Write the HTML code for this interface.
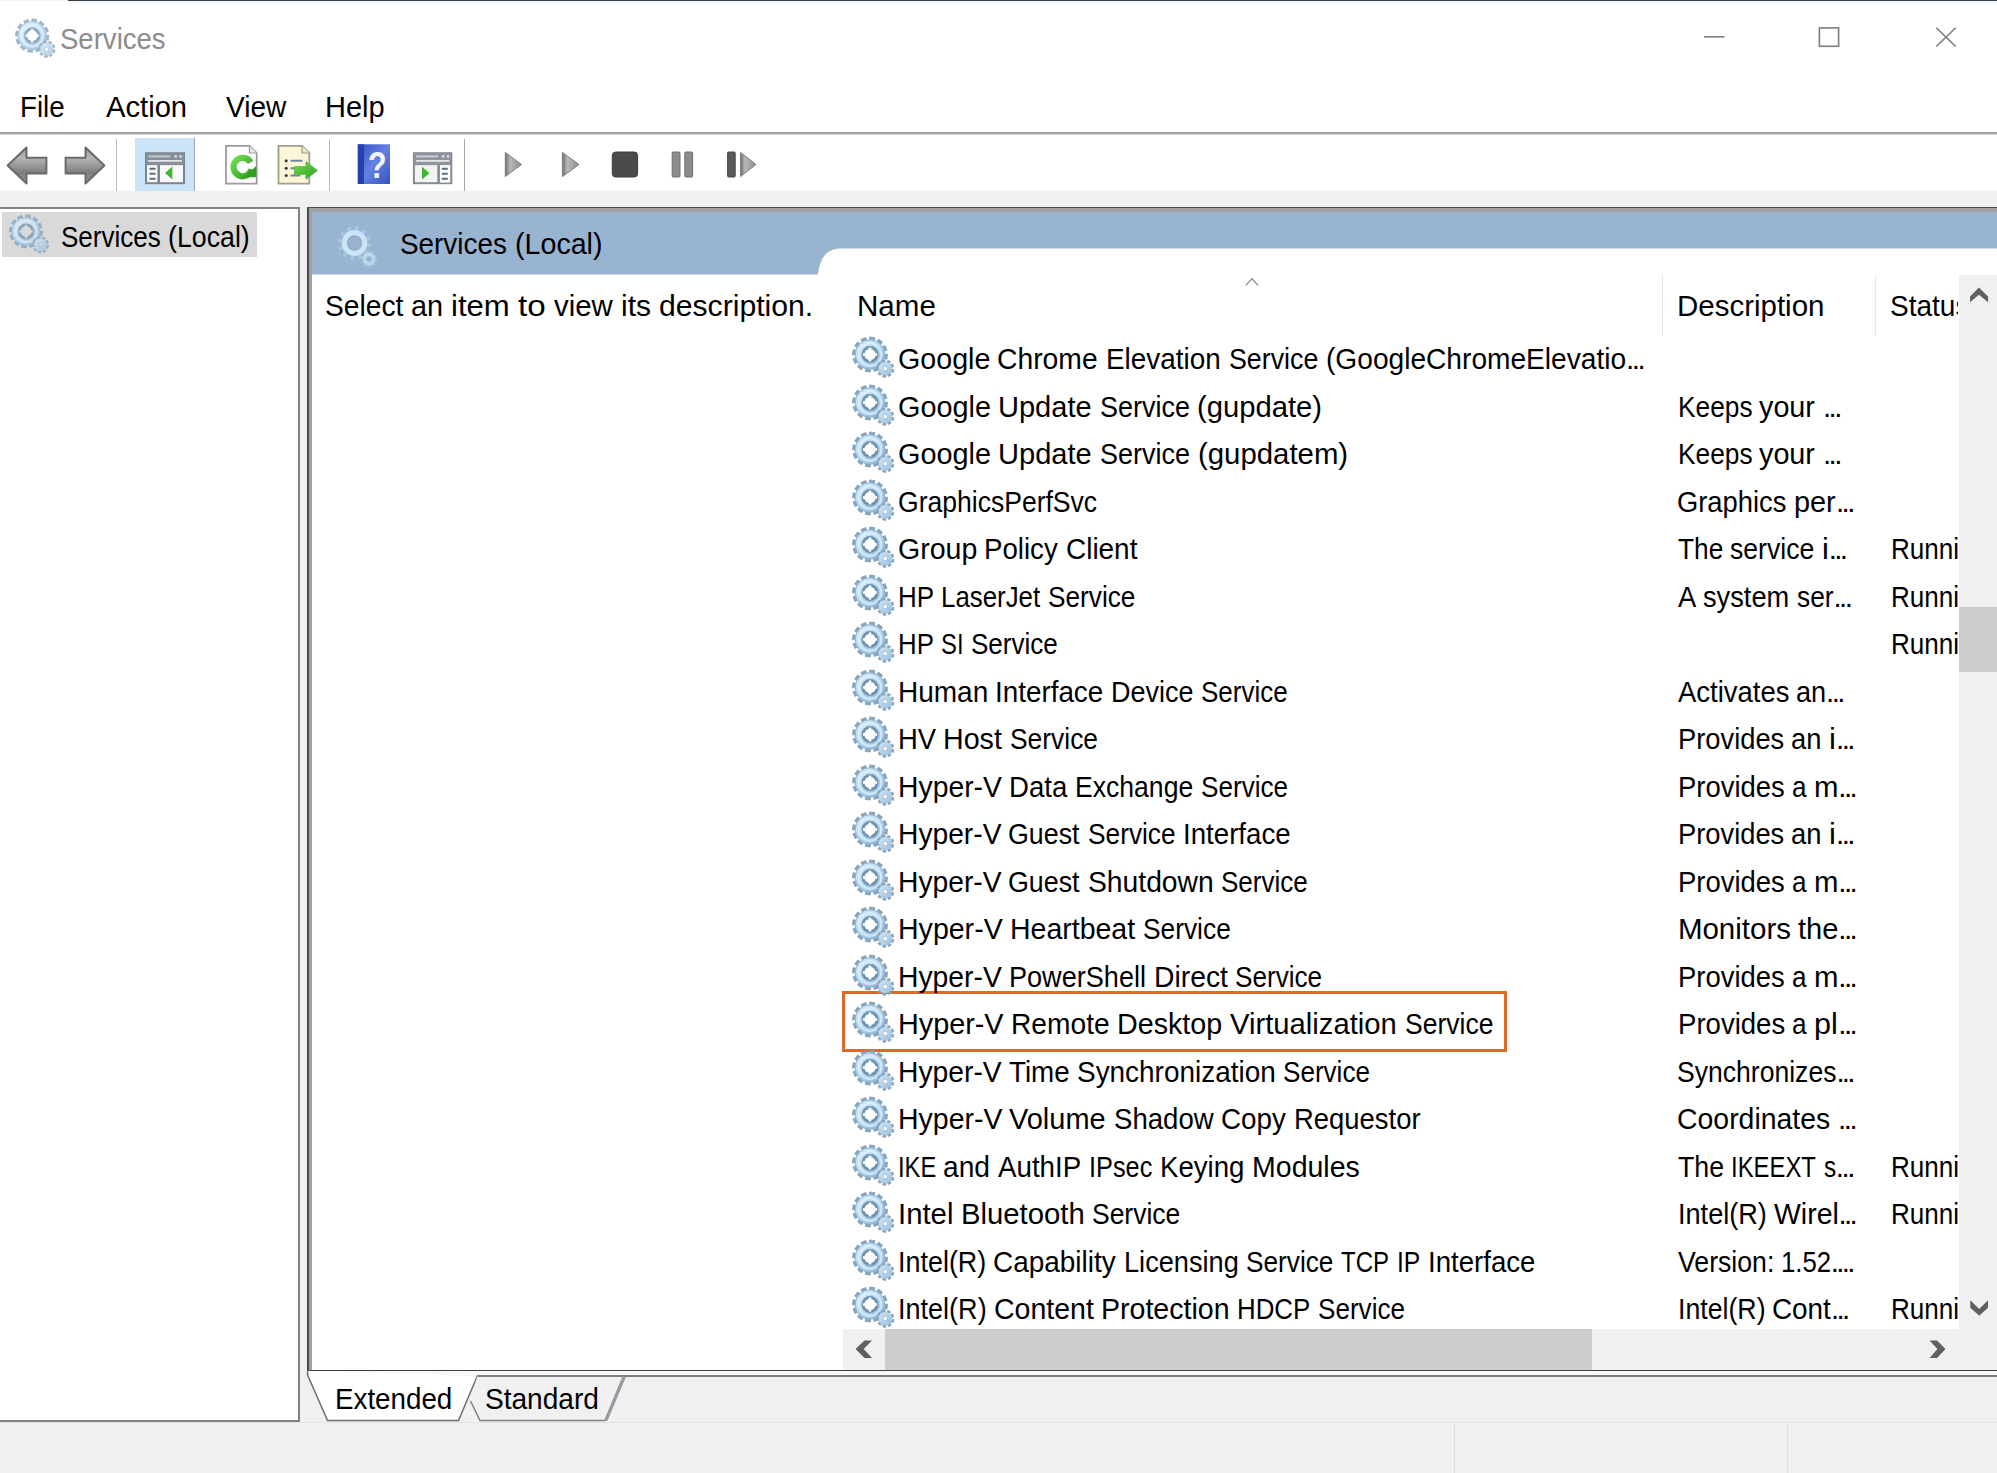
<!DOCTYPE html>
<html lang="en"><head><meta charset="utf-8"><title>Services</title>
<style>
html,body{margin:0;padding:0}
html{overflow:hidden;width:1997px;height:1473px;background:#f0f0f0}
body{width:1997px;height:1473px;position:relative;overflow:hidden;background:#f0f0f0;font-family:"Liberation Sans",sans-serif;font-size:29px}
.a{position:absolute}
.t{position:absolute;top:0;white-space:pre;line-height:40px;height:40px;font-size:29.5px;transform-origin:0 0;font-family:"Liberation Sans",sans-serif}
.r{position:absolute;left:0;height:40px;width:0;white-space:pre}
.clip{position:absolute;height:40px;overflow:hidden}
.ic{position:absolute;overflow:visible}
</style></head><body>
<svg width="0" height="0" style="position:absolute"><defs>
<linearGradient id="gg" x1="0.1" y1="0.05" x2="0.9" y2="0.95"><stop offset="0" stop-color="#d3eaf9"/><stop offset="0.5" stop-color="#b4d6ee"/><stop offset="1" stop-color="#8fb6d6"/></linearGradient>
<linearGradient id="gs" x1="0" y1="0" x2="1" y2="1"><stop offset="0" stop-color="#cfe6f6"/><stop offset="1" stop-color="#9abfdc"/></linearGradient>
<symbol id="gear" viewBox="0 0 44 44" overflow="visible">
<path fill-rule="evenodd" fill="#86a5bf" stroke="#7d9ab3" stroke-width=".7" d="M32.19,17.97 L35.60,18.21 L34.93,23.31 L31.58,22.66 L30.56,25.13 L33.39,27.05 L30.26,31.13 L27.68,28.89 L25.56,30.52 L27.05,33.59 L22.30,35.57 L21.18,32.34 L18.53,32.69 L18.29,36.10 L13.19,35.43 L13.84,32.08 L11.37,31.06 L9.45,33.89 L5.37,30.76 L7.61,28.18 L5.98,26.06 L2.91,27.55 L0.93,22.80 L4.16,21.68 L3.81,19.03 L0.40,18.79 L1.07,13.69 L4.42,14.34 L5.44,11.87 L2.61,9.95 L5.74,5.87 L8.32,8.11 L10.44,6.48 L8.95,3.41 L13.70,1.43 L14.82,4.66 L17.47,4.31 L17.71,0.90 L22.81,1.57 L22.16,4.92 L24.63,5.94 L26.55,3.11 L30.63,6.24 L28.39,8.82 L30.02,10.94 L33.09,9.45 L35.07,14.20 L31.84,15.32Z M11.90,18.50a6.10,6.10 0 1,0 12.20,0a6.10,6.10 0 1,0 -12.20,0Z"/>
<path fill-rule="evenodd" fill="url(#gg)" stroke="#8fb0cd" stroke-width=".9" d="M3.20,18.50a14.80,14.80 0 1,0 29.60,0a14.80,14.80 0 1,0 -29.60,0Z M11.90,18.50a6.10,6.10 0 1,0 12.20,0a6.10,6.10 0 1,0 -12.20,0Z"/>
<circle cx="18" cy="18.5" r="11.3" fill="none" stroke="#e4f3fd" stroke-width="2.2" opacity=".7"/>
<circle cx="18" cy="18.5" r="7.3" fill="none" stroke="#6888a5" stroke-width="2.3" opacity=".9"/>
<path d="M16.8,11.4h2.4v2.2h-2.4zM16.8,23.4h2.4v2.2h-2.4zM10.900,17.300h2.2v2.4h-2.2zM22.900,17.300h2.2v2.4h-2.2z" style="fill:var(--bg,#fff)"/>
<path fill-rule="evenodd" fill="#89a8c2" stroke="#7d9ab3" stroke-width=".6" d="M39.67,33.18 L42.04,33.64 L41.10,36.68 L38.89,35.72 L37.81,37.14 L39.33,39.01 L36.66,40.74 L35.57,38.58 L33.84,38.98 L33.79,41.39 L30.64,40.99 L31.20,38.64 L29.61,37.83 L28.03,39.65 L25.87,37.32 L27.80,35.88 L27.11,34.24 L24.73,34.61 L24.58,31.44 L26.98,31.58 L27.51,29.88 L25.44,28.63 L27.36,26.10 L29.12,27.76 L30.61,26.79 L29.83,24.51 L32.93,23.81 L33.21,26.20 L34.98,26.42 L35.84,24.18 L38.67,25.63 L37.34,27.64 L38.55,28.95 L40.66,27.78 L41.89,30.71 L39.59,31.40Z M31.00,32.60a2.30,2.30 0 1,0 4.60,0a2.30,2.30 0 1,0 -4.60,0Z"/>
<path fill-rule="evenodd" fill="url(#gs)" d="M26.60,32.60a6.70,6.70 0 1,0 13.40,0a6.70,6.70 0 1,0 -13.40,0Z M31.00,32.60a2.30,2.30 0 1,0 4.60,0a2.30,2.30 0 1,0 -4.60,0Z"/>
</symbol></defs></svg>
<!-- title + menu -->
<div class="a" style="left:0;top:0;width:1997px;height:132px;background:#fff"></div>
<div class="a" style="left:0;top:0;width:68px;height:1px;background:#f4f4f4"></div>
<div class="a" style="left:68px;top:0;width:1929px;height:1px;background:#3a4149"></div>
<div class="a" style="left:68px;top:1px;width:1929px;height:2px;background:#f1f6fb"></div>
<!-- caption buttons -->
<svg class="ic" style="left:1690px;top:15px" width="300" height="45">
<path d="M14,21.8H34.5" stroke="#7d7d7d" stroke-width="1.6" fill="none"/>
<rect x="129.4" y="12.9" width="19.2" height="18.4" stroke="#7d7d7d" stroke-width="1.6" fill="none"/>
<path d="M246.3,12.7L265.7,31.5M265.7,12.7L246.3,31.5" stroke="#7d7d7d" stroke-width="1.6" fill="none"/>
</svg>
<!-- menu underline -->
<div class="a" style="left:0;top:132px;width:1997px;height:2px;background:#a3a3a3"></div>
<div class="a" style="left:0;top:134px;width:1997px;height:1px;background:#dcdcdc"></div>
<!-- toolbar -->
<div class="a" style="left:0;top:135px;width:1997px;height:56px;background:#fff"></div>
<!-- toolbar separators -->
<div class="a" style="left:116.400px;top:138.500px;width:1.100px;height:52px;background:#bcbcbc"></div>
<div class="a" style="left:329px;top:138.500px;width:1.200px;height:52px;background:#b8b8b8"></div>
<div class="a" style="left:464.200px;top:138.500px;width:1.200px;height:52px;background:#a8a8a8"></div>
<!-- highlighted button -->
<div class="a" style="left:135px;top:137.500px;width:58.500px;height:53.500px;background:#cce4f7"></div>
<div class="a" style="left:194px;top:137.500px;width:1px;height:53.500px;background:#9aa7b4"></div>
<svg class="ic" style="left:0;top:135px" width="800" height="56">
<defs>
<linearGradient id="ag" x1="0" y1="0" x2="0" y2="1"><stop offset="0" stop-color="#9c9c9c"/><stop offset=".3" stop-color="#b4b4b4"/><stop offset=".7" stop-color="#7e7e7e"/><stop offset="1" stop-color="#9a9a9a"/></linearGradient>
<linearGradient id="pg" x1="0" y1="0" x2="1" y2="0"><stop offset="0" stop-color="#6f6f6f"/><stop offset=".3" stop-color="#b8b8b8"/><stop offset="1" stop-color="#8e8e8e"/></linearGradient>
<linearGradient id="hg" x1="0" y1="0" x2="1" y2="1"><stop offset="0" stop-color="#3450c4"/><stop offset=".5" stop-color="#6482e2"/><stop offset="1" stop-color="#3752c0"/></linearGradient>
<linearGradient id="grn" x1="0" y1="0" x2="1" y2="1"><stop offset="0" stop-color="#6fdc52"/><stop offset="1" stop-color="#2f9e1e"/></linearGradient>
</defs>
<!-- back / forward arrows -->
<path d="M7.600,30.500L26.500,12.600V22.800H46.400V38.400H26.500V48.400Z" fill="url(#ag)" stroke="#6a6a6a" stroke-width="2" stroke-linejoin="round"/>
<path d="M104.400,30.500L85.500,12.600V22.800H65.600V38.400H85.500V48.400Z" fill="url(#ag)" stroke="#6a6a6a" stroke-width="2" stroke-linejoin="round"/>
<!-- show/hide console tree -->
<rect x="146" y="18.200" width="38" height="30" fill="#fafafa" stroke="#7d8590" stroke-width="2"/>
<rect x="146" y="18.200" width="38" height="12" fill="#878f9b"/>
<rect x="148.300" y="20.500" width="22" height="1.800" fill="#c9ced6"/>
<rect x="174.500" y="20.200" width="2.400" height="2.400" fill="#dfe3e8"/><rect x="179.300" y="20.200" width="2.400" height="2.400" fill="#dfe3e8"/>
<rect x="148" y="25" width="34" height="1.800" fill="#dfe3ea"/>
<rect x="157.400" y="30" width="2.600" height="18" fill="#7d8590"/>
<path d="M149.500,33.800h6M149.500,38.800h6M149.500,43.800h6" stroke="#5f6b80" stroke-width="2"/>
<path d="M172.300,31.500V44.500L165,38Z" fill="#3fb62f"/>
<!-- refresh -->
<path d="M226,10.800H249.500L256.700,18V48.700H226Z" fill="#fdfdfd" stroke="#9c9c9c" stroke-width="1.800"/>
<path d="M249.500,10.800V18H256.700" fill="#e8e8e8" stroke="#9c9c9c" stroke-width="1.200"/>
<path d="M251.590,34.400A9.200,9.200 0 1 1 250.600,27.300" fill="none" stroke="url(#grn)" stroke-width="6.2"/>
<path d="M244,42.300h12.300v-11.300Z" fill="#2fa01f"/>
<!-- export list -->
<path d="M278.500,10.800H302L309.300,18V48.700H278.500Z" fill="#fdf5d8" stroke="#a39d8c" stroke-width="1.800"/>
<path d="M302,10.800V18H309.300" fill="#efe7c8" stroke="#a39d8c" stroke-width="1.200"/>
<circle cx="286.200" cy="25.800" r="1.500" fill="#333"/><circle cx="286.200" cy="33.200" r="1.500" fill="#333"/><circle cx="286.200" cy="40.600" r="1.500" fill="#333"/>
<path d="M290.500,25.800h12M290.500,33.200h6M290.500,40.600h10" stroke="#7186a6" stroke-width="2"/>
<path d="M294.500,31.700h11.500v-5L317.400,35.500L306,44.300v-5H294.500Z" fill="url(#grn)" stroke="#48b532" stroke-width=".8"/>
<!-- help -->
<rect x="357.800" y="9.300" width="32.200" height="39.700" fill="url(#hg)"/>
<rect x="357.800" y="9.300" width="6.200" height="39.700" fill="#263fae"/>
<text x="377.200" y="43.500" font-family="Liberation Sans, sans-serif" font-weight="bold" font-size="37" fill="#f4f6ff" text-anchor="middle" transform="translate(377.200 0) scale(.82 1) translate(-377.200 0)">?</text>
<!-- action pane icon -->
<rect x="413.900" y="18.200" width="37.400" height="30" fill="#f4f4f4" stroke="#858a93" stroke-width="2"/>
<rect x="413.900" y="18.200" width="37.400" height="12" fill="#8f949d"/>
<rect x="416.200" y="20.500" width="22" height="1.800" fill="#d0d4da"/>
<rect x="442" y="20.200" width="2.400" height="2.400" fill="#e3e6ea"/><rect x="446.800" y="20.200" width="2.400" height="2.400" fill="#e3e6ea"/>
<rect x="416" y="25" width="33.400" height="1.800" fill="#e3e6ea"/>
<rect x="437.300" y="30" width="2.600" height="18" fill="#858a93"/>
<rect x="440" y="30.500" width="10" height="17" fill="#fdfdfd"/>
<path d="M441.800,33.800h6M441.800,38.800h6M441.800,43.800h6" stroke="#5f6b80" stroke-width="2"/>
<path d="M422,31.800V44.500L429.400,38.200Z" fill="#3fb62f"/>
<!-- play, play, stop, pause, resume -->
<path d="M505.300,17.400L521.500,29.500L505.300,41.600Z" fill="url(#pg)" stroke="#7e7e7e" stroke-width="1"/>
<path d="M562.400,17.400L579,29.500L562.400,41.600Z" fill="url(#pg)" stroke="#7e7e7e" stroke-width="1"/>
<rect x="612.300" y="17" width="25.300" height="25" rx="3.500" fill="#4a4a4a" stroke="#3a3a3a" stroke-width="1"/>
<rect x="672.200" y="17" width="7.800" height="25" rx="1" fill="#8c8c8c" stroke="#6e6e6e" stroke-width="1"/>
<rect x="684.800" y="17" width="7.800" height="25" rx="1" fill="#8c8c8c" stroke="#6e6e6e" stroke-width="1"/>
<rect x="727.600" y="17" width="7.600" height="25" rx="1" fill="#5a5a5a" stroke="#4a4a4a" stroke-width="1"/>
<path d="M740.500,17.400L756,29.500L740.500,41.600Z" fill="url(#pg)" stroke="#7e7e7e" stroke-width="1"/>
</svg>

<!-- left pane -->
<div class="a" style="left:0;top:207px;width:300px;height:1215px;background:#828282"></div>
<div class="a" style="left:0;top:209px;width:297.6px;height:1211px;background:#fff"></div>
<div class="a" style="left:2.3px;top:212.4px;width:254.7px;height:44.3px;background:#d9d9d9"></div>
<!-- right pane -->
<div class="a" style="left:307px;top:207px;width:1690px;height:1164px;background:#4a4a4a"></div>
<div class="a" style="left:308.6px;top:208.4px;width:1689px;height:1161.5px;background:#a0a0a0"></div>
<div class="a" style="left:312px;top:211.8px;width:1685px;height:1158.1px;background:#fff"></div>
<svg class="ic" style="left:312px;top:211.8px" width="1685" height="64"><path d="M0,0H1685V36.4H530C514,36.4 508,46 506,62.4H0Z" fill="#99b4d1"/></svg>
<!-- column separators -->
<div class="a" style="left:1662px;top:274px;width:1px;height:62px;background:#e9e9e9"></div>
<div class="a" style="left:1875px;top:274px;width:1px;height:62px;background:#e9e9e9"></div>
<svg class="ic" style="left:1240px;top:274px" width="24" height="16"><path d="M5.8,11.4L11.9,4.8L18,11.4" stroke="#8a8a8a" stroke-width="1.3" fill="none"/></svg>
<!-- vertical scrollbar -->
<div class="a" style="left:1958.6px;top:274.5px;width:38.4px;height:1095.4px;background:#f0f0f0"></div>
<div class="a" style="left:1958.6px;top:607.3px;width:38.4px;height:64.4px;background:#cdcdcd"></div>
<svg class="ic" style="left:1958.6px;top:274.5px" width="38.4" height="1054">
<path d="M19.9,12.5L29.1,21.5V27.2L19.9,19.8L11.1,27.2V21.5Z" fill="#606060"/>
<path d="M11.3,1025.2V1032.7L20.2,1040.8L29,1032.7V1025.2L20.2,1034Z" fill="#606060"/>
</svg>
<!-- horizontal scrollbar -->
<div class="a" style="left:842.6px;top:1328.5px;width:1116px;height:41.4px;background:#f0f0f0"></div>
<div class="a" style="left:885px;top:1328.5px;width:707px;height:41.4px;background:#cdcdcd"></div>
<svg class="ic" style="left:842.6px;top:1328.5px" width="1116" height="41.4">
<path d="M29,11.6H21.5L12.6,20.1L21.5,28.9H29L20.7,20.1Z" fill="#606060"/>
<path d="M1086.6,11.6H1094.1L1102.5,20.1L1094.1,28.9H1086.6L1094.4,20.1Z" fill="#606060"/>
</svg>
<!-- orange highlight -->
<div class="a" style="left:841.8px;top:991.1px;width:665.7px;height:61.4px;box-sizing:border-box;border:3.3px solid #dc6a28"></div>
<!-- tabs -->
<div class="a" style="left:312px;top:1371px;width:1685px;height:4px;background:#f8f8f8"></div>
<div class="a" style="left:477px;top:1375px;width:1520px;height:1.6px;background:#7c7c7c"></div>
<svg class="ic" style="left:300px;top:1370px" width="400" height="56">
<path d="M7.6,1L7.6,5L27.5,50.5H158.5L177,6" fill="#fff" stroke="none"/>
<path d="M7.6,0V5L27.5,50.5H158.5L177.3,6" fill="none" stroke="#6e6e6e" stroke-width="1.5"/>
<path d="M12,0.5H1697" stroke="#404040" stroke-width="1"/>
<path d="M170.5,31L180,50.5H305L323.5,6.3H177.3" fill="#f0f0f0" stroke="#808080" stroke-width="1.5"/>
<path d="M306,50.5L324.5,6.3" stroke="#9a9a9a" stroke-width="3" fill="none"/>
</svg>
<!-- status bar -->
<div class="a" style="left:0;top:1422.4px;width:1997px;height:1px;background:#e3e3e3"></div>
<div class="a" style="left:1454px;top:1424px;width:1px;height:49px;background:#e0e0e0"></div>
<div class="a" style="left:1787px;top:1424px;width:1px;height:49px;background:#e0e0e0"></div>
<svg class="ic" style="left:14.6px;top:17.6px;opacity:0.8" width="42" height="42"><use href="#gear"/></svg>
<svg class="ic" style="left:8.6px;top:213.6px;opacity:0.78;--bg:#d9d9d9" width="41.5" height="41.5"><use href="#gear"/></svg>
<svg class="ic" style="left:330.700px;top:221.200px" width="60" height="50"><circle cx="23.5" cy="22" r="15" fill="none" stroke="#abc6e1" stroke-width="3.6" stroke-dasharray="3.9 3.95" opacity=".9"/><circle cx="23.5" cy="22" r="10.3" fill="none" stroke="#cbe5f7" stroke-width="5.2"/><circle cx="23.5" cy="22" r="6.6" fill="none" stroke="#8ea7c8" stroke-width="1.3" opacity=".75"/><circle cx="38" cy="38" r="7.4" fill="none" stroke="#a9c5df" stroke-width="2.2" stroke-dasharray="2.2 2.45"/><circle cx="38" cy="38" r="4.6" fill="none" stroke="#bdd8ea" stroke-width="3.8"/></svg>
<svg class="ic" style="left:851.6px;top:336.1px;opacity:1.0" width="44" height="44"><use href="#gear"/></svg>
<svg class="ic" style="left:851.6px;top:383.6px;opacity:1.0" width="44" height="44"><use href="#gear"/></svg>
<svg class="ic" style="left:851.6px;top:431.1px;opacity:1.0" width="44" height="44"><use href="#gear"/></svg>
<svg class="ic" style="left:851.6px;top:478.6px;opacity:1.0" width="44" height="44"><use href="#gear"/></svg>
<svg class="ic" style="left:851.6px;top:526.1px;opacity:1.0" width="44" height="44"><use href="#gear"/></svg>
<svg class="ic" style="left:851.6px;top:573.6px;opacity:1.0" width="44" height="44"><use href="#gear"/></svg>
<svg class="ic" style="left:851.6px;top:621.1px;opacity:1.0" width="44" height="44"><use href="#gear"/></svg>
<svg class="ic" style="left:851.6px;top:668.6px;opacity:1.0" width="44" height="44"><use href="#gear"/></svg>
<svg class="ic" style="left:851.6px;top:716.1px;opacity:1.0" width="44" height="44"><use href="#gear"/></svg>
<svg class="ic" style="left:851.6px;top:763.6px;opacity:1.0" width="44" height="44"><use href="#gear"/></svg>
<svg class="ic" style="left:851.6px;top:811.1px;opacity:1.0" width="44" height="44"><use href="#gear"/></svg>
<svg class="ic" style="left:851.6px;top:858.6px;opacity:1.0" width="44" height="44"><use href="#gear"/></svg>
<svg class="ic" style="left:851.6px;top:906.1px;opacity:1.0" width="44" height="44"><use href="#gear"/></svg>
<svg class="ic" style="left:851.6px;top:953.6px;opacity:1.0" width="44" height="44"><use href="#gear"/></svg>
<svg class="ic" style="left:851.6px;top:1001.1px;opacity:1.0" width="44" height="44"><use href="#gear"/></svg>
<svg class="ic" style="left:851.6px;top:1048.6px;opacity:1.0" width="44" height="44"><use href="#gear"/></svg>
<svg class="ic" style="left:851.6px;top:1096.1px;opacity:1.0" width="44" height="44"><use href="#gear"/></svg>
<svg class="ic" style="left:851.6px;top:1143.6px;opacity:1.0" width="44" height="44"><use href="#gear"/></svg>
<svg class="ic" style="left:851.6px;top:1191.1px;opacity:1.0" width="44" height="44"><use href="#gear"/></svg>
<svg class="ic" style="left:851.6px;top:1238.6px;opacity:1.0" width="44" height="44"><use href="#gear"/></svg>
<svg class="ic" style="left:851.6px;top:1286.1px;opacity:1.0" width="44" height="44"><use href="#gear"/></svg>
<div class="r" style="top:19.38px;color:#8c8c8c"><span class="t" style="left:60.07px;transform:scaleX(0.9338);">Services</span></div>
<div class="r" style="top:86.58px"><span class="t" style="left:20.32px;transform:scaleX(0.9396);">File</span></div>
<div class="r" style="top:86.58px"><span class="t" style="left:105.60px;transform:scaleX(0.9890);">Action</span></div>
<div class="r" style="top:86.58px"><span class="t" style="left:225.60px;transform:scaleX(0.9500);">View</span></div>
<div class="r" style="top:86.58px"><span class="t" style="left:324.53px;transform:scaleX(0.9834);">Help</span></div>
<div class="r" style="top:216.58px"><span class="t" style="left:60.72px;transform:scaleX(0.8830);">Services </span><span class="t" style="left:167.93px;transform:scaleX(0.9063);">(Local)</span></div>
<div class="r" style="top:224.38px"><span class="t" style="left:400.46px;transform:scaleX(0.9447);">Services </span><span class="t" style="left:515.25px;transform:scaleX(0.9706);">(Local)</span></div>
<div class="r" style="top:286.18px"><span class="t" style="left:324.54px;transform:scaleX(0.9555);">Select </span><span class="t" style="left:410.73px;transform:scaleX(0.9777);">an </span><span class="t" style="left:451.01px;transform:scaleX(1.0536);">item </span><span class="t" style="left:517.92px;transform:scaleX(1.1242);">to </span><span class="t" style="left:553.77px;transform:scaleX(0.9964);">view </span><span class="t" style="left:620.76px;transform:scaleX(1.0192);">its </span><span class="t" style="left:659.02px;transform:scaleX(1.0223);">description.</span></div>
<div class="r" style="top:286.18px"><span class="t" style="left:856.60px;transform:scaleX(1.0015);">Name</span></div>
<div class="r" style="top:286.18px"><span class="t" style="left:1677.00px;transform:scaleX(0.9990);">Description</span></div>
<div class="r" style="top:1379.18px"><span class="t" style="left:334.82px;transform:scaleX(0.9410);">Extended</span></div>
<div class="r" style="top:1379.18px"><span class="t" style="left:485.35px;transform:scaleX(0.9512);">Standard</span></div>
<div class="r" style="top:339.18px"><span class="t" style="left:897.53px;transform:scaleX(0.9707);">Google </span><span class="t" style="left:997.42px;transform:scaleX(0.9589);">Chrome </span><span class="t" style="left:1105.91px;transform:scaleX(0.9455);">Elevation </span><span class="t" style="left:1228.52px;transform:scaleX(0.9083);">Service </span><span class="t" style="left:1325.75px;transform:scaleX(0.9534);">(GoogleChromeElevatio</span><span class="t" style="left:1625.90px;letter-spacing:-2.44px;">...</span></div>
<div class="r" style="top:386.68px"><span class="t" style="left:897.52px;transform:scaleX(0.9768);">Google </span><span class="t" style="left:998.05px;transform:scaleX(0.9839);">Update </span><span class="t" style="left:1099.57px;transform:scaleX(0.9140);">Service </span><span class="t" style="left:1197.41px;transform:scaleX(0.9906);">(gupdate)</span></div>
<div class="r" style="top:386.68px"><span class="t" style="left:1678.12px;transform:scaleX(0.8916);">Keeps </span><span class="t" style="left:1759.32px;transform:scaleX(0.9749);">your </span><span class="t" style="left:1823.01px;letter-spacing:-2.60px;">...</span></div>
<div class="r" style="top:434.18px"><span class="t" style="left:897.52px;transform:scaleX(0.9778);">Google </span><span class="t" style="left:998.14px;transform:scaleX(0.9849);">Update </span><span class="t" style="left:1099.77px;transform:scaleX(0.9149);">Service </span><span class="t" style="left:1197.70px;transform:scaleX(0.9951);">(gupdatem)</span></div>
<div class="r" style="top:434.18px"><span class="t" style="left:1678.12px;transform:scaleX(0.8916);">Keeps </span><span class="t" style="left:1759.32px;transform:scaleX(0.9749);">your </span><span class="t" style="left:1823.01px;letter-spacing:-2.60px;">...</span></div>
<div class="r" style="top:481.68px"><span class="t" style="left:897.60px;transform:scaleX(0.8995);">GraphicsPerfSvc</span></div>
<div class="r" style="top:481.68px"><span class="t" style="left:1677.37px;transform:scaleX(0.9263);">Graphics </span><span class="t" style="left:1794.18px;transform:scaleX(0.9783);">per</span><span class="t" style="left:1835.89px;letter-spacing:-2.49px;">...</span></div>
<div class="r" style="top:529.18px"><span class="t" style="left:897.53px;transform:scaleX(0.9679);">Group </span><span class="t" style="left:984.40px;transform:scaleX(0.9368);">Policy </span><span class="t" style="left:1065.97px;transform:scaleX(0.9469);">Client</span></div>
<div class="r" style="top:529.18px"><span class="t" style="left:1677.50px;transform:scaleX(0.8907);">The </span><span class="t" style="left:1729.88px;transform:scaleX(0.9026);">service </span><span class="t" style="left:1821.91px;transform:scaleX(1.0387);">i</span><span class="t" style="left:1828.72px;letter-spacing:-2.66px;">...</span></div>
<div class="r" style="top:576.68px"><span class="t" style="left:898.34px;transform:scaleX(0.8800);">HP </span><span class="t" style="left:941.04px;transform:scaleX(0.8764);">LaserJet </span><span class="t" style="left:1047.98px;transform:scaleX(0.8883);">Service</span></div>
<div class="r" style="top:576.68px"><span class="t" style="left:1677.50px;transform:scaleX(0.9269);">A </span><span class="t" style="left:1702.88px;transform:scaleX(0.9236);">system </span><span class="t" style="left:1796.91px;transform:scaleX(0.8931);">ser</span><span class="t" style="left:1833.51px;letter-spacing:-2.60px;">...</span></div>
<div class="r" style="top:624.18px"><span class="t" style="left:898.35px;transform:scaleX(0.8748);">HP </span><span class="t" style="left:940.78px;transform:scaleX(0.8070);">SI </span><span class="t" style="left:971.00px;transform:scaleX(0.8830);">Service</span></div>
<div class="r" style="top:671.68px"><span class="t" style="left:898.20px;transform:scaleX(0.9491);">Human </span><span class="t" style="left:995.17px;transform:scaleX(0.9431);">Interface </span><span class="t" style="left:1111.14px;transform:scaleX(0.9148);">Device </span><span class="t" style="left:1201.34px;transform:scaleX(0.8806);">Service</span></div>
<div class="r" style="top:671.68px"><span class="t" style="left:1677.50px;transform:scaleX(0.9305);">Activates </span><span class="t" style="left:1795.96px;transform:scaleX(0.9190);">an</span><span class="t" style="left:1826.12px;letter-spacing:-2.66px;">...</span></div>
<div class="r" style="top:719.18px"><span class="t" style="left:898.24px;transform:scaleX(0.9285);">HV </span><span class="t" style="left:943.08px;transform:scaleX(0.9711);">Host </span><span class="t" style="left:1009.82px;transform:scaleX(0.8950);">Service</span></div>
<div class="r" style="top:719.18px"><span class="t" style="left:1678.05px;transform:scaleX(0.9259);">Provides </span><span class="t" style="left:1791.03px;transform:scaleX(0.9266);">an </span><span class="t" style="left:1829.20px;transform:scaleX(1.0473);">i</span><span class="t" style="left:1836.07px;letter-spacing:-2.58px;">...</span></div>
<div class="r" style="top:766.68px"><span class="t" style="left:898.18px;transform:scaleX(0.9604);">Hyper-V </span><span class="t" style="left:1008.87px;transform:scaleX(0.9350);">Data </span><span class="t" style="left:1074.88px;transform:scaleX(0.9008);">Exchange </span><span class="t" style="left:1200.83px;transform:scaleX(0.8858);">Service</span></div>
<div class="r" style="top:766.68px"><span class="t" style="left:1678.04px;transform:scaleX(0.9300);">Provides </span><span class="t" style="left:1791.54px;transform:scaleX(0.8828);">a </span><span class="t" style="left:1813.82px;transform:scaleX(0.9956);">m</span><span class="t" style="left:1838.28px;letter-spacing:-2.54px;">...</span></div>
<div class="r" style="top:814.18px"><span class="t" style="left:898.19px;transform:scaleX(0.9564);">Hyper-V </span><span class="t" style="left:1008.40px;transform:scaleX(0.9086);">Guest </span><span class="t" style="left:1087.64px;transform:scaleX(0.8906);">Service </span><span class="t" style="left:1182.96px;transform:scaleX(0.9375);">Interface</span></div>
<div class="r" style="top:814.18px"><span class="t" style="left:1678.05px;transform:scaleX(0.9259);">Provides </span><span class="t" style="left:1791.03px;transform:scaleX(0.9266);">an </span><span class="t" style="left:1829.20px;transform:scaleX(1.0473);">i</span><span class="t" style="left:1836.07px;letter-spacing:-2.58px;">...</span></div>
<div class="r" style="top:861.68px"><span class="t" style="left:898.19px;transform:scaleX(0.9566);">Hyper-V </span><span class="t" style="left:1008.42px;transform:scaleX(0.9087);">Guest </span><span class="t" style="left:1087.66px;transform:scaleX(0.9580);">Shutdown </span><span class="t" style="left:1221.08px;transform:scaleX(0.8821);">Service</span></div>
<div class="r" style="top:861.68px"><span class="t" style="left:1678.04px;transform:scaleX(0.9300);">Provides </span><span class="t" style="left:1791.54px;transform:scaleX(0.8828);">a </span><span class="t" style="left:1813.82px;transform:scaleX(0.9956);">m</span><span class="t" style="left:1838.28px;letter-spacing:-2.54px;">...</span></div>
<div class="r" style="top:909.18px"><span class="t" style="left:898.17px;transform:scaleX(0.9674);">Hyper-V </span><span class="t" style="left:1009.68px;transform:scaleX(0.9656);">Heartbeat </span><span class="t" style="left:1142.59px;transform:scaleX(0.8923);">Service</span></div>
<div class="r" style="top:909.18px"><span class="t" style="left:1677.90px;">Monitors </span><span class="t" style="left:1797.89px;transform:scaleX(0.9865);">the</span><span class="t" style="left:1838.34px;letter-spacing:-2.57px;">...</span></div>
<div class="r" style="top:956.68px"><span class="t" style="left:898.18px;transform:scaleX(0.9599);">Hyper-V </span><span class="t" style="left:1008.81px;transform:scaleX(0.9180);">PowerShell </span><span class="t" style="left:1153.54px;transform:scaleX(0.9604);">Direct </span><span class="t" style="left:1235.28px;transform:scaleX(0.8853);">Service</span></div>
<div class="r" style="top:956.68px"><span class="t" style="left:1678.04px;transform:scaleX(0.9300);">Provides </span><span class="t" style="left:1791.54px;transform:scaleX(0.8828);">a </span><span class="t" style="left:1813.82px;transform:scaleX(0.9956);">m</span><span class="t" style="left:1838.28px;letter-spacing:-2.54px;">...</span></div>
<div class="r" style="top:1004.18px"><span class="t" style="left:898.15px;transform:scaleX(0.9756);">Hyper-V </span><span class="t" style="left:1010.63px;transform:scaleX(0.9547);">Remote </span><span class="t" style="left:1117.12px;transform:scaleX(0.9722);">Desktop </span><span class="t" style="left:1230.21px;transform:scaleX(0.9905);">Virtualization </span><span class="t" style="left:1404.84px;transform:scaleX(0.8999);">Service</span></div>
<div class="r" style="top:1004.18px"><span class="t" style="left:1678.03px;transform:scaleX(0.9343);">Provides </span><span class="t" style="left:1792.07px;transform:scaleX(0.8869);">a </span><span class="t" style="left:1814.46px;transform:scaleX(1.0340);">pl</span><span class="t" style="left:1838.20px;letter-spacing:-2.50px;">...</span></div>
<div class="r" style="top:1051.68px"><span class="t" style="left:898.18px;transform:scaleX(0.9581);">Hyper-V </span><span class="t" style="left:1008.60px;transform:scaleX(0.9414);">Time </span><span class="t" style="left:1077.02px;transform:scaleX(0.9466);">Synchronization </span><span class="t" style="left:1283.44px;transform:scaleX(0.8836);">Service</span></div>
<div class="r" style="top:1051.68px"><span class="t" style="left:1677.40px;transform:scaleX(0.9003);">Synchronizes</span><span class="t" style="left:1836.44px;letter-spacing:-2.77px;">...</span></div>
<div class="r" style="top:1099.18px"><span class="t" style="left:898.17px;transform:scaleX(0.9655);">Hyper-V </span><span class="t" style="left:1009.45px;transform:scaleX(0.9819);">Volume </span><span class="t" style="left:1113.87px;transform:scaleX(0.9344);">Shadow </span><span class="t" style="left:1221.28px;transform:scaleX(0.9402);">Copy </span><span class="t" style="left:1293.82px;transform:scaleX(0.9295);">Requestor</span></div>
<div class="r" style="top:1099.18px"><span class="t" style="left:1677.34px;transform:scaleX(0.9632);">Coordinates </span><span class="t" style="left:1838.09px;letter-spacing:-2.44px;">...</span></div>
<div class="r" style="top:1146.68px"><span class="t" style="left:898.49px;transform:scaleX(0.8051);">IKE </span><span class="t" style="left:943.24px;transform:scaleX(0.9553);">and </span><span class="t" style="left:998.01px;transform:scaleX(0.9393);">AuthIP </span><span class="t" style="left:1088.95px;transform:scaleX(0.8578);">IPsec </span><span class="t" style="left:1160.00px;transform:scaleX(0.9351);">Keying </span><span class="t" style="left:1252.10px;transform:scaleX(0.9670);">Modules</span></div>
<div class="r" style="top:1146.68px"><span class="t" style="left:1677.50px;transform:scaleX(0.9080);">The </span><span class="t" style="left:1730.90px;transform:scaleX(0.8097);">IKEEXT </span><span class="t" style="left:1823.71px;transform:scaleX(0.8243);">s</span><span class="t" style="left:1835.86px;letter-spacing:-2.48px;">...</span></div>
<div class="r" style="top:1194.18px"><span class="t" style="left:898.11px;transform:scaleX(0.9946);">Intel </span><span class="t" style="left:960.51px;transform:scaleX(0.9927);">Bluetooth </span><span class="t" style="left:1092.11px;transform:scaleX(0.8971);">Service</span></div>
<div class="r" style="top:1194.18px"><span class="t" style="left:1678.06px;transform:scaleX(0.9185);">Intel(R) </span><span class="t" style="left:1773.59px;transform:scaleX(0.9644);">Wirel</span><span class="t" style="left:1838.38px;letter-spacing:-2.59px;">...</span></div>
<div class="r" style="top:1241.68px"><span class="t" style="left:898.27px;transform:scaleX(0.9125);">Intel(R) </span><span class="t" style="left:993.16px;transform:scaleX(0.9471);">Capability </span><span class="t" style="left:1123.55px;transform:scaleX(0.9211);">Licensing </span><span class="t" style="left:1246.06px;transform:scaleX(0.8888);">Service </span><span class="t" style="left:1341.20px;transform:scaleX(0.8123);">TCP </span><span class="t" style="left:1396.83px;transform:scaleX(0.8341);">IP </span><span class="t" style="left:1427.79px;transform:scaleX(0.9356);">Interface</span></div>
<div class="r" style="top:1241.68px"><span class="t" style="left:1677.50px;transform:scaleX(0.9034);">Version: </span><span class="t" style="left:1780.68px;transform:scaleX(0.8730);">1.52</span><span class="t" style="left:1830.80px;letter-spacing:-2.70px;">....</span></div>
<div class="r" style="top:1289.18px"><span class="t" style="left:898.27px;transform:scaleX(0.9165);">Intel(R) </span><span class="t" style="left:993.57px;transform:scaleX(0.9665);">Content </span><span class="t" style="left:1101.18px;transform:scaleX(0.9677);">Protection </span><span class="t" style="left:1237.45px;transform:scaleX(0.8758);">HDCP </span><span class="t" style="left:1318.40px;transform:scaleX(0.8841);">Service</span></div>
<div class="r" style="top:1289.18px"><span class="t" style="left:1678.09px;transform:scaleX(0.9053);">Intel(R) </span><span class="t" style="left:1772.20px;transform:scaleX(0.9443);">Cont</span><span class="t" style="left:1831.04px;letter-spacing:-2.72px;">...</span></div>
<div class="clip" style="left:1887.20px;top:286.18px;width:71.10px"><span class="t" style="left:3.05px;top:0;transform:scaleX(0.9492)">Status</span></div>
<div class="clip" style="left:1888.30px;top:529.18px;width:70.00px"><span class="t" style="left:2.23px;top:0;transform:scaleX(0.8835)">Running</span></div>
<div class="clip" style="left:1888.30px;top:576.68px;width:70.00px"><span class="t" style="left:2.23px;top:0;transform:scaleX(0.8835)">Running</span></div>
<div class="clip" style="left:1888.30px;top:624.18px;width:70.00px"><span class="t" style="left:2.23px;top:0;transform:scaleX(0.8835)">Running</span></div>
<div class="clip" style="left:1888.30px;top:1146.68px;width:70.00px"><span class="t" style="left:2.23px;top:0;transform:scaleX(0.8835)">Running</span></div>
<div class="clip" style="left:1888.30px;top:1194.18px;width:70.00px"><span class="t" style="left:2.23px;top:0;transform:scaleX(0.8835)">Running</span></div>
<div class="clip" style="left:1888.30px;top:1289.18px;width:70.00px"><span class="t" style="left:2.23px;top:0;transform:scaleX(0.8835)">Running</span></div>
</body></html>
